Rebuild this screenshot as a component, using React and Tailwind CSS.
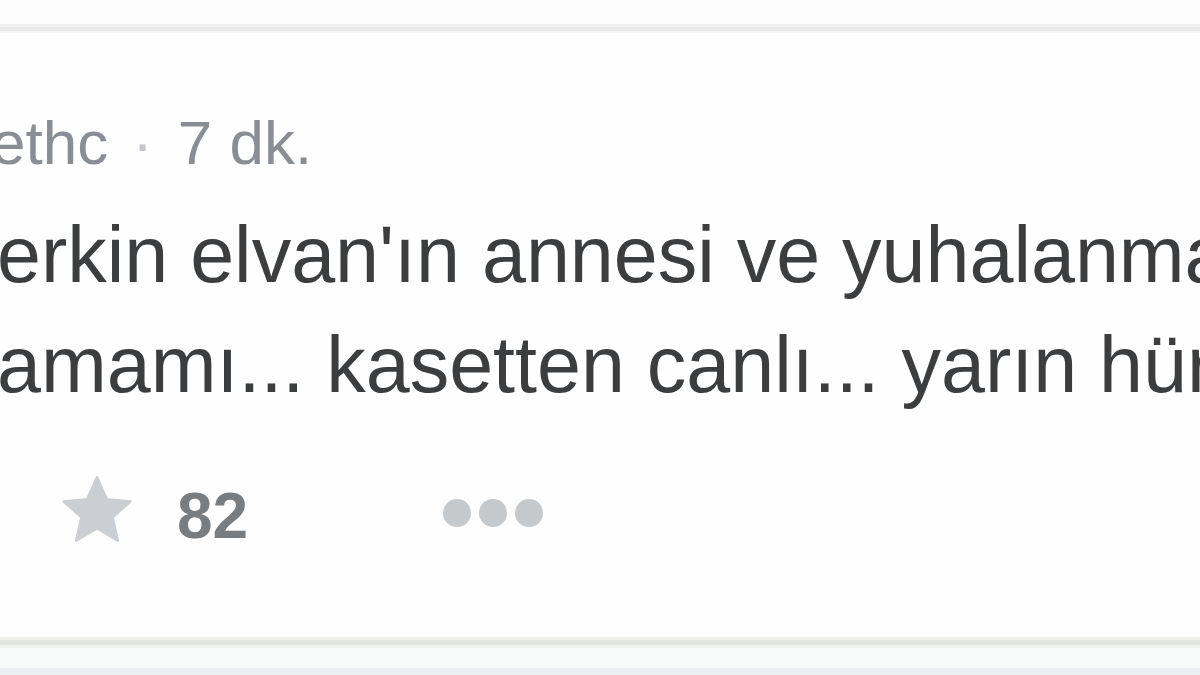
import React from 'react';

function Star() {
  return (
    <svg width="76" height="74" viewBox="0 0 24 23" className="shrink-0">
      <path
        d="M12 1.2l3.1 6.9 7.4.7-5.6 5 1.7 7.4L12 17.3l-6.6 3.9 1.7-7.4-5.6-5 7.4-.7z"
        fill="#cbcfd3"
        stroke="#cbcfd3"
        strokeWidth="0.8"
        strokeLinejoin="round"
      />
    </svg>
  );
}

export default function App() {
  const font = { fontFamily: '"Liberation Sans", Arial, sans-serif' };

  return (
    <div className="w-[1200px] h-[675px] overflow-hidden flex flex-col bg-white" style={font}>
      <div className="h-[24px] bg-[#fcfcfc]" />
      <div className="h-[3px] bg-[#f2f2f2]" />
      <div className="h-[4px] bg-[#e9e9e9]" />
      <div className="h-[2px] bg-[#f4f4f4]" />

      <div className="flex-1 flex flex-col bg-[#fefefe] overflow-hidden">
        {/* header */}
        <div className="mt-[79px] h-[62px] leading-[62px] text-[62px] whitespace-nowrap text-[#8a8e93] -ml-[9px] flex">
          <span>ethc</span>
          <span className="text-[#c4c7ca] ml-[24px] mr-[25px]">·</span>
          <span>7 dk.</span>
        </div>

        {/* tweet text */}
        <div className="mt-[26px] text-[79px] leading-[110px] text-[#3c3d3e] whitespace-nowrap -ml-[3px]">
          <div>erkin elvan'ın annesi ve yuhalanmasını</div>
          <div>amamı... kasetten canlı... yarın hürriyette</div>
        </div>

        {/* actions */}
        <div className="mt-[55px] h-[70px] flex items-center pl-[59px]">
          <Star />
          <span className="ml-[42px] text-[64px] font-bold text-[#7a7d80] leading-none mt-[12px]">82</span>
          <div className="ml-[195px] flex gap-[8px] mt-[6px]">
            <span className="w-[28px] h-[28px] rounded-full bg-[#c6c9cc]" />
            <span className="w-[28px] h-[28px] rounded-full bg-[#c6c9cc]" />
            <span className="w-[28px] h-[28px] rounded-full bg-[#c6c9cc]" />
          </div>
        </div>
      </div>

      <div className="h-[3px] bg-[#eef0ea]" />
      <div className="h-[5px] bg-[#e4e7df]" />
      <div className="h-[3px] bg-[#f1f3ef]" />
      <div className="h-[20px] bg-[#f9fbfa]" />
      <div className="h-[7px] bg-[#eeeff3]" />
    </div>
  );
}
